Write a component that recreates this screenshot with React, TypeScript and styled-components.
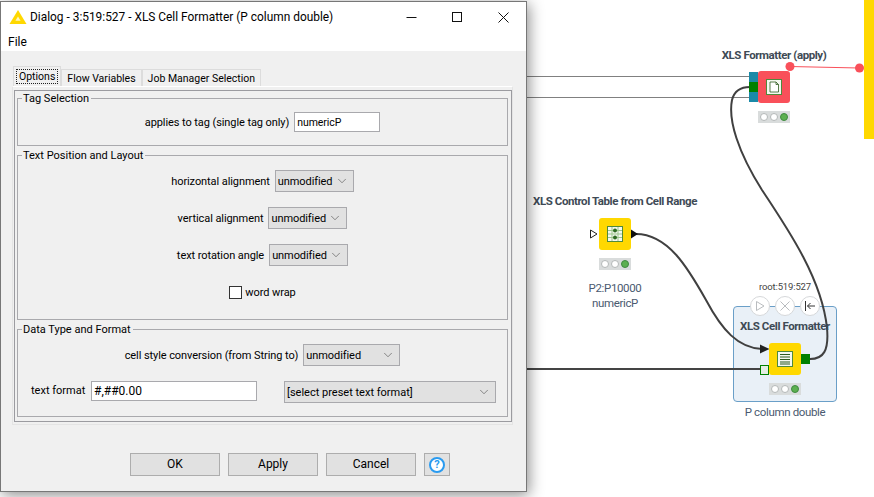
import { createGlobalStyle, styled } from "styled-components";
import { ChevronDown } from "lucide-react";

const GlobalStyle = createGlobalStyle`
    html, body {
        margin: 0;
        padding: 0;
        background: #fff;
    }
`;

const uiFont = `Roboto, "Open Sans", sans-serif`;
const nodeFont = `Roboto, "Liberation Sans", sans-serif`;

/* ---------- workflow canvas ---------- */

const Canvas = styled.div`
    position: relative;
    width: 874px;
    height: 497px;
    overflow: hidden;
    background: #fff;
`;

const Wires = styled.svg`
    position: absolute;
    inset: 0;
`;

const YellowBar = styled.div`
    position: absolute;
    left: 864px;
    top: 0;
    width: 10px;
    height: 139px;
    background: #ffd800;
`;

const Selection = styled.div`
    position: absolute;
    left: 733px;
    top: 306px;
    width: 104px;
    height: 96px;
    box-sizing: border-box;
    background: #e9f0f7;
    border: 1px solid #6a9fc8;
    border-radius: 4px;
`;

const Tile = styled.div<{ $x: number; $y: number; $color: string }>`
    position: absolute;
    left: ${(p) => p.$x}px;
    top: ${(p) => p.$y}px;
    width: 32px;
    height: 32px;
    border-radius: 3px;
    background: ${(p) => p.$color};
    display: flex;
    align-items: center;
    justify-content: center;
`;

const Port = styled.div<{ $x: number; $y: number; $color: string; $hollow?: boolean }>`
    position: absolute;
    left: ${(p) => p.$x}px;
    top: ${(p) => p.$y}px;
    width: 9px;
    height: 10px;
    box-sizing: border-box;
    background: ${(p) => (p.$hollow ? "#e4ede4" : p.$color)};
    border: ${(p) => (p.$hollow ? `1px solid ${p.$color}` : "none")};
`;

const Status = styled.div<{ $x: number; $y: number }>`
    position: absolute;
    left: ${(p) => p.$x}px;
    top: ${(p) => p.$y}px;
    width: 32px;
    height: 12px;
    box-sizing: border-box;
    padding: 0 2px;
    background: #d9dcdc;
    display: flex;
    align-items: center;
    justify-content: space-between;
`;

const Lamp = styled.span<{ $on?: boolean }>`
    width: 8px;
    height: 8px;
    box-sizing: border-box;
    border-radius: 50%;
    background: ${(p) => (p.$on ? "#5cb050" : "#fff")};
    border: 1px solid ${(p) => (p.$on ? "#3f8a3f" : "#b4b8b8")};
`;

const NodeTitle = styled.div<{ $cx: number; $y: number }>`
    position: absolute;
    left: ${(p) => p.$cx}px;
    top: ${(p) => p.$y}px;
    transform: translateX(-50%);
    white-space: nowrap;
    font: 700 11.5px/14px ${nodeFont};
    letter-spacing: -0.42px;
    color: #3e4a55;
`;

const NodeNote = styled.div<{ $cx: number; $y: number }>`
    position: absolute;
    left: ${(p) => p.$cx}px;
    top: ${(p) => p.$y}px;
    transform: translateX(-50%);
    white-space: nowrap;
    text-align: center;
    font: 400 11.5px/15px ${nodeFont};
    letter-spacing: -0.35px;
    color: #4a5a70;
`;

const NodeId = styled(NodeNote)`
    font-size: 9.5px;
    line-height: 12px;
    letter-spacing: -0.15px;
    color: #444;
`;

const ActionButton = styled.div<{ $x: number }>`
    position: absolute;
    left: ${(p) => p.$x}px;
    top: 296px;
    width: 20px;
    height: 20px;
    box-sizing: border-box;
    border-radius: 50%;
    background: #fff;
    border: 1px solid #d6d8da;
    display: flex;
    align-items: center;
    justify-content: center;
`;

/* ---------- dialog window ---------- */

const Dialog = styled.div`
    position: absolute;
    left: 0;
    top: 1px;
    width: 527px;
    height: 491px;
    box-sizing: border-box;
    display: flex;
    flex-direction: column;
    background: #f0f0f0;
    border: 1px solid #777;
    box-shadow: 2px 3px 14px rgba(0, 0, 0, 0.45);
    font: 400 11px/15px ${uiFont};
    color: #000;
`;

const TitleBar = styled.div`
    height: 30px;
    flex: none;
    display: flex;
    align-items: center;
    background: #fff;
    padding-left: 8px;
`;

const TitleText = styled.div`
    flex: 1;
    margin-left: 3px;
    font-size: 11.9px;
    white-space: nowrap;
`;

const WindowControl = styled.div`
    width: 46px;
    height: 30px;
    display: flex;
    align-items: center;
    justify-content: center;
`;

const MenuBar = styled.div`
    height: 19px;
    flex: none;
    box-sizing: border-box;
    display: flex;
    align-items: center;
    padding: 1px 0 0 7px;
    background: #fff;
    font-size: 12px;
`;

const Body = styled.div`
    flex: 1;
    display: flex;
    flex-direction: column;
    padding: 15px 13px 0 11px;
`;

const TabStrip = styled.div`
    display: flex;
    align-items: flex-end;
    height: 20px;
    margin-left: 1px;
    font-size: 10.5px;
`;

const Tab = styled.div<{ $active?: boolean }>`
    box-sizing: border-box;
    height: ${(p) => (p.$active ? 20 : 17)}px;
    padding: ${(p) => (p.$active ? "2px" : "0 5px")};
    display: flex;
    align-items: center;
    border: 1px solid #dcdcdc;
    border-bottom: none;
    background: #f0f0f0;
    white-space: nowrap;
`;

const TabFocus = styled.span`
    padding: 0 3px;
    height: 15px;
    display: flex;
    align-items: center;
    outline: 1px dotted #222;
    outline-offset: -1px;
`;

const TabFrame = styled.div`
    box-sizing: border-box;
    width: 501px;
    height: 339px;
    padding: 3px 0 2px 1px;
    border: 1px solid #e4e4e4;
    border-top-color: #fff;
`;

const TabPanel = styled.div`
    box-sizing: border-box;
    height: 332px;
    padding: 0 3px 0 2px;
    border: 1px solid #9b9ba0;
`;

const Group = styled.fieldset<{ $height: number }>`
    box-sizing: border-box;
    height: ${(p) => p.$height}px;
    width: 491px;
    margin: 0 0 2px;
    padding: 0 4px;
    border: 1px solid #a9a9ad;
    display: flex;
    flex-direction: column;
    min-inline-size: 0;
`;

const GroupTitle = styled.legend`
    padding: 0 2px 0 1px;
    line-height: 15px;
`;

const Rows = styled.div<{ $top: number; $gap: number }>`
    display: flex;
    flex-direction: column;
    align-items: center;
    padding-top: ${(p) => p.$top}px;
    gap: ${(p) => p.$gap}px;
`;

const Row = styled.div`
    display: flex;
    align-items: center;
    gap: 5px;
    height: 22px;
    white-space: nowrap;
    letter-spacing: -0.08px;
`;

const TextField = styled.div<{ $width: number; $size: number }>`
    box-sizing: border-box;
    width: ${(p) => p.$width}px;
    height: 20px;
    padding-left: 2px;
    display: flex;
    align-items: center;
    background: #fff;
    border: 1px solid #a9a9ad;
    font-size: ${(p) => p.$size}px;
`;

const Select = styled.div<{ $width: number }>`
    box-sizing: border-box;
    width: ${(p) => p.$width}px;
    height: 22px;
    padding: 0 4px 0 2px;
    display: flex;
    align-items: center;
    justify-content: space-between;
    background: #e1e1e1;
    border: 1px solid #a9a9ad;
`;

const CheckBox = styled.span`
    width: 13px;
    height: 13px;
    box-sizing: border-box;
    background: #fff;
    border: 1px solid #333;
`;

const CheckRow = styled(Row)`
    gap: 3px;
`;

const FormatRow = styled.div`
    align-self: stretch;
    display: flex;
    align-items: flex-start;
    height: 22px;
    padding-left: 9px;
`;

const FormatLabel = styled.span`
    margin-right: 5px;
    width: 55px;
    line-height: 20px;
    white-space: nowrap;
`;

const PresetSelect = styled(Select)`
    margin-left: 27px;
`;

const ButtonBar = styled.div`
    display: flex;
    gap: 8px;
    padding: 28px 0 0 118px;
`;

const Button = styled.div`
    box-sizing: border-box;
    width: 90px;
    height: 23px;
    display: flex;
    align-items: center;
    justify-content: center;
    background: #e1e1e1;
    border: 1px solid #adadad;
    font-size: 12px;
`;

const HelpButton = styled(Button)`
    width: 26px;
`;

const HelpBadge = styled.span`
    width: 16px;
    height: 16px;
    box-sizing: border-box;
    border-radius: 50%;
    border: 2px solid #2a9bf0;
    background: #fff;
    color: #2a9bf0;
    display: flex;
    align-items: center;
    justify-content: center;
    font: 700 11px/12px ${nodeFont};
`;

/* ---------- drawings ---------- */

const KnimeLogo = () => (
    <svg width="18" height="16" viewBox="0 0 18 16">
        <path d="M9 1 L17.5 15 H0.5 Z" fill="#ffd800" />
        <path d="M9 7.5 L11.6 11.8 H6.4 Z" fill="#fff6c0" />
    </svg>
);

const MetaIcon = ({ children }: { children: React.ReactNode }) => (
    <svg width="16" height="16" viewBox="0 0 16 16">
        <rect x="0.5" y="0.5" width="15" height="15" fill="#f4f8f0" stroke="#4f8a3c" />
        {children}
    </svg>
);

const Lamps = ({ x, y }: { x: number; y: number }) => (
    <Status $x={x} $y={y}>
        <Lamp />
        <Lamp />
        <Lamp $on />
    </Status>
);

const Chevron = () => <ChevronDown size={14} strokeWidth={1} color="#444" />;

const App = () => {
    return (
        <Canvas>
            <GlobalStyle />
            <Selection />
            <YellowBar />

            <Wires width="874" height="497" viewBox="0 0 874 497" fill="none">
                <path d="M527 76.5 H750 M527 97.5 H750" stroke="#808080" />
                <path d="M527 369 H761" stroke="#444" strokeWidth="2" />
                <path
                    d="M636 234 C668 234 688 268 706 300 C722 330 738 348 762 349"
                    stroke="#404040"
                    strokeWidth="2"
                />
                <path
                    d="M808 359 C824 360 829 350 827 328 C822 280 790 232 762 190 C738 152 728 120 732 100 C734 92 740 87 750 87"
                    stroke="#404040"
                    strokeWidth="2"
                />
                <path d="M638 234 L631 229.5 V238.5 Z" fill="#111" />
                <path d="M590.5 230 L597 234 L590.5 238 Z" fill="#fff" stroke="#222" />
                <path d="M769.5 349 L760 344.5 V353.5 Z" fill="#222" />
                <path d="M790 66.5 L859 68" stroke="#f9505a" />
                <circle cx="790" cy="66.5" r="4.5" fill="#f9505a" />
                <circle cx="859.5" cy="68" r="4.5" fill="#f9505a" />
            </Wires>

            <NodeTitle $cx={774} $y={48}>XLS Formatter (apply)</NodeTitle>
            <Port $x={749} $y={72} $color="#1a8aa8" />
            <Port $x={749} $y={82} $color="#008000" />
            <Port $x={749} $y={92} $color="#1a8aa8" />
            <Tile $x={758} $y={71} $color="#f9505a">
                <MetaIcon>
                    <path d="M4 3 H10 L12.5 5.5 V13 H4 Z" fill="#fff" stroke="#2d5a20" strokeWidth="0.8" />
                    <path d="M10 3 V5.5 H12.5" stroke="#2d5a20" strokeWidth="0.8" fill="none" />
                </MetaIcon>
            </Tile>
            <Lamps x={758} y={111} />

            <NodeTitle $cx={615} $y={194}>XLS Control Table from Cell Range</NodeTitle>
            <Tile $x={599} $y={218} $color="#ffd800">
                <MetaIcon>
                    <path d="M1 4.5 H15 M1 8 H15 M1 11.5 H15 M5 1 V15 M11 1 V15" stroke="#9cc58c" />
                    <circle cx="8" cy="4.5" r="2" fill="#2d6a20" />
                    <circle cx="8" cy="11.5" r="2" fill="#2d6a20" />
                </MetaIcon>
            </Tile>
            <Lamps x={599} y={258} />
            <NodeNote $cx={615} $y={281}>
                P2:P10000
                <br />
                numericP
            </NodeNote>

            <NodeId $cx={785} $y={281}>root:519:527</NodeId>
            <ActionButton $x={750}>
                <svg width="12" height="12" viewBox="0 0 12 12" fill="none">
                    <path d="M2.5 1.5 L10 6 L2.5 10.5 Z" stroke="#b9bcbf" />
                </svg>
            </ActionButton>
            <ActionButton $x={775}>
                <svg width="12" height="12" viewBox="0 0 12 12" fill="none">
                    <path d="M1.5 1.5 L10.5 10.5 M10.5 1.5 L1.5 10.5" stroke="#b9bcbf" />
                </svg>
            </ActionButton>
            <ActionButton $x={800}>
                <svg width="12" height="12" viewBox="0 0 12 12" fill="none">
                    <path d="M1.5 1 V11 M11 6 H3.5 M6.5 3 L3.5 6 L6.5 9" stroke="#333" />
                </svg>
            </ActionButton>
            <NodeTitle $cx={785} $y={319}>XLS Cell Formatter</NodeTitle>
            <Port $x={760} $y={365} $color="#008000" $hollow />
            <Port $x={801} $y={354} $color="#008000" />
            <Tile $x={769} $y={343} $color="#ffd800">
                <MetaIcon>
                    <path
                        d="M3 3.5 H13 M3 6 H13 M3 8.5 H13 M3 11 H13 M3 13 H13"
                        stroke="#2d5a20"
                        strokeWidth="1.2"
                    />
                </MetaIcon>
            </Tile>
            <Lamps x={769} y={383} />
            <NodeNote $cx={785} $y={405}>P column double</NodeNote>

            <Dialog>
                <TitleBar>
                    <KnimeLogo />
                    <TitleText>Dialog - 3:519:527 - XLS Cell Formatter (P column double)</TitleText>
                    <WindowControl>
                        <svg width="11" height="11" viewBox="0 0 11 11" fill="none">
                            <path d="M0.5 5.5 H10.5" stroke="#111" />
                        </svg>
                    </WindowControl>
                    <WindowControl>
                        <svg width="11" height="11" viewBox="0 0 11 11" fill="none">
                            <rect x="0.5" y="0.5" width="9" height="9" stroke="#111" />
                        </svg>
                    </WindowControl>
                    <WindowControl>
                        <svg width="11" height="11" viewBox="0 0 11 11" fill="none">
                            <path d="M0.5 0.5 L10.5 10.5 M10.5 0.5 L0.5 10.5" stroke="#111" />
                        </svg>
                    </WindowControl>
                </TitleBar>
                <MenuBar>File</MenuBar>

                <Body>
                    <TabStrip>
                        <Tab $active>
                            <TabFocus>Options</TabFocus>
                        </Tab>
                        <Tab>Flow Variables</Tab>
                        <Tab>Job Manager Selection</Tab>
                    </TabStrip>
                    <TabFrame>
                        <TabPanel>
                            <Group $height={55}>
                                <GroupTitle>Tag Selection</GroupTitle>
                                <Rows $top={5} $gap={0}>
                                    <Row>
                                        applies to tag (single tag only)
                                        <TextField $width={86} $size={10.5}>numericP</TextField>
                                    </Row>
                                </Rows>
                            </Group>
                            <Group $height={172}>
                                <GroupTitle>Text Position and Layout</GroupTitle>
                                <Rows $top={7} $gap={15}>
                                    <Row>
                                        horizontal alignment
                                        <Select $width={79}>
                                            unmodified
                                            <Chevron />
                                        </Select>
                                    </Row>
                                    <Row>
                                        vertical alignment
                                        <Select $width={79}>
                                            unmodified
                                            <Chevron />
                                        </Select>
                                    </Row>
                                    <Row>
                                        text rotation angle
                                        <Select $width={79}>
                                            unmodified
                                            <Chevron />
                                        </Select>
                                    </Row>
                                    <CheckRow>
                                        <CheckBox />
                                        word wrap
                                    </CheckRow>
                                </Rows>
                            </Group>
                            <Group $height={95}>
                                <GroupTitle>Data Type and Format</GroupTitle>
                                <Rows $top={7} $gap={15}>
                                    <Row>
                                        cell style conversion (from String to)
                                        <Select $width={97}>
                                            unmodified
                                            <Chevron />
                                        </Select>
                                    </Row>
                                    <FormatRow>
                                        <FormatLabel>text format</FormatLabel>
                                        <TextField $width={166} $size={12}>#,##0.00</TextField>
                                        <PresetSelect $width={212}>
                                            [select preset text format]
                                            <Chevron />
                                        </PresetSelect>
                                    </FormatRow>
                                </Rows>
                            </Group>
                        </TabPanel>
                    </TabFrame>
                    <ButtonBar>
                        <Button>OK</Button>
                        <Button>Apply</Button>
                        <Button>Cancel</Button>
                        <HelpButton>
                            <HelpBadge>?</HelpBadge>
                        </HelpButton>
                    </ButtonBar>
                </Body>
            </Dialog>
        </Canvas>
    );
};

export default App;
